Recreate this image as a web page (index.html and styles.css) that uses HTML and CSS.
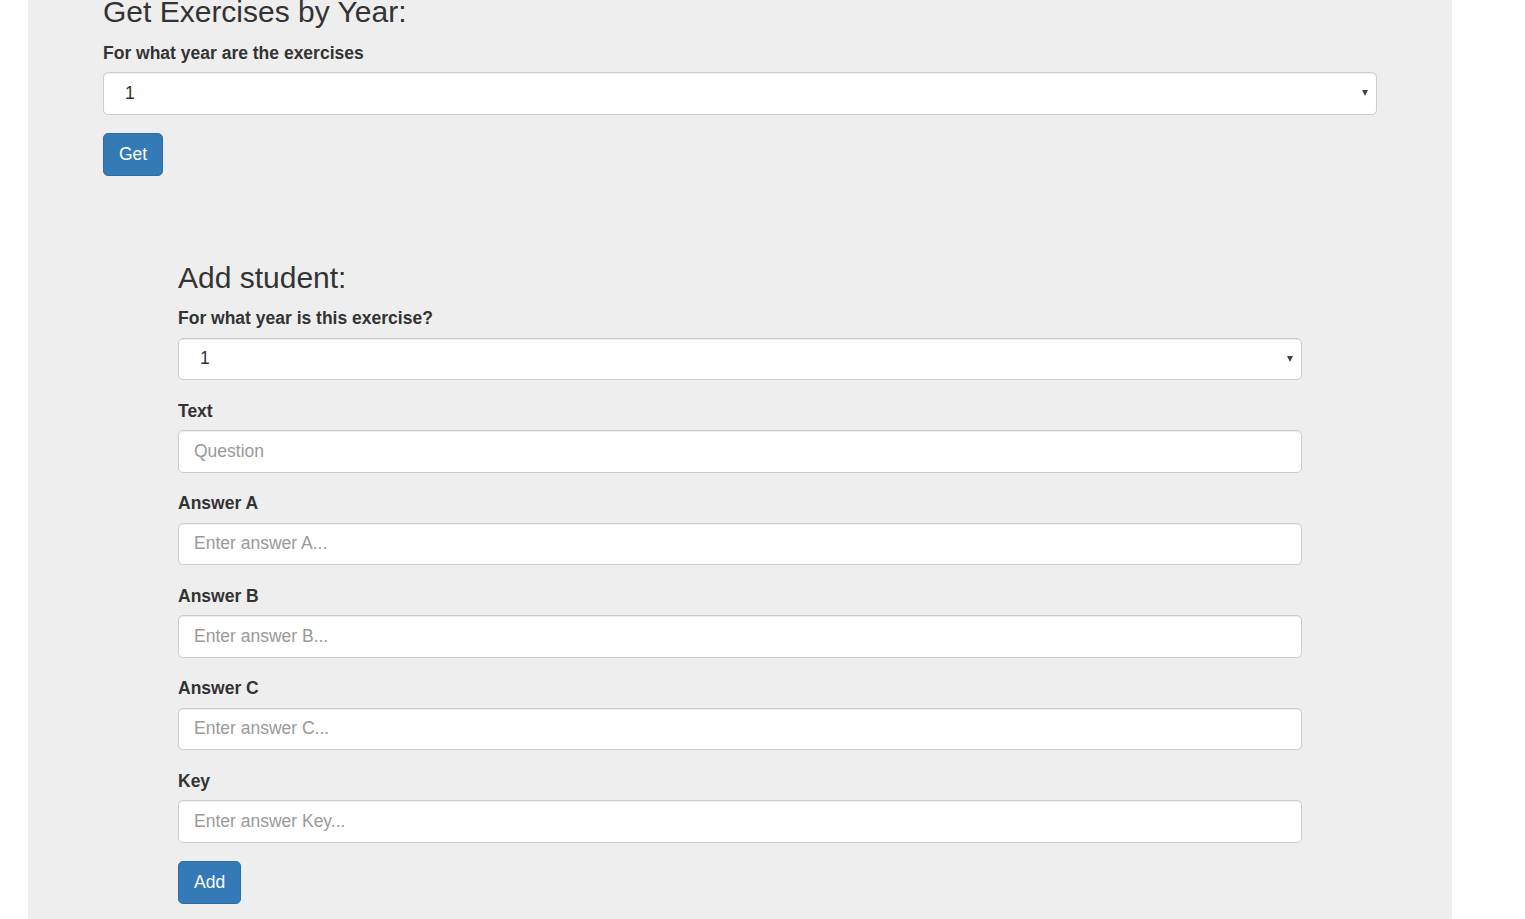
FILE: index.html
```html
<!DOCTYPE html>
<html>
<head>
<meta charset="utf-8">
<title>Exercises</title>
<link rel="stylesheet" href="styles.css">
</head>
<body>
<div class="page">
  <div class="panel">
    <h3 class="title first">Get Exercises by Year:</h3>
    <form class="form">
      <div class="group">
        <label class="label">For what year are the exercises</label>
        <div class="select-wrap">
          <select class="control select"><option>1</option><option>2</option><option>3</option></select>
        </div>
      </div>
      <button type="button" class="btn">Get</button>
    </form>

    <div class="inner">
      <h3 class="title">Add student:</h3>
      <form class="form">
        <div class="group">
          <label class="label">For what year is this exercise?</label>
          <div class="select-wrap">
            <select class="control select"><option>1</option><option>2</option><option>3</option></select>
          </div>
        </div>
        <div class="group">
          <label class="label">Text</label>
          <input class="control" type="text" placeholder="Question">
        </div>
        <div class="group">
          <label class="label">Answer A</label>
          <input class="control" type="text" placeholder="Enter answer A...">
        </div>
        <div class="group">
          <label class="label">Answer B</label>
          <input class="control" type="text" placeholder="Enter answer B...">
        </div>
        <div class="group">
          <label class="label">Answer C</label>
          <input class="control" type="text" placeholder="Enter answer C...">
        </div>
        <div class="group">
          <label class="label">Key</label>
          <input class="control" type="text" placeholder="Enter answer Key...">
        </div>
        <button type="button" class="btn">Add</button>
      </form>
    </div>
  </div>
</div>
</body>
</html>
```

FILE: styles.css
```css
html, body {
  margin: 0;
  padding: 0;
  background: #fff;
}
body {
  font-family: "Liberation Sans", Arial, Helvetica, sans-serif;
  font-size: 17.5px;
  line-height: 25px;
  color: #333;
}
.page {
  padding-left: 28px;
  width: 1424px;
  overflow: hidden;
}
.panel {
  background: #eee;
  padding: 0 75px 40px;
  border-top: 0.1px solid #eee;
  margin-top: -5.6px;
}
.title {
  font-size: 30px;
  font-weight: 500;
  line-height: 33px;
  margin: 25px 0 12.5px;
  color: #333;
}
.title.first {
  margin-top: 0;
}
.form {
  margin: 0;
}
.group {
  margin-bottom: 18.75px;
}
.label {
  display: block;
  font-weight: bold;
  font-size: 17.5px;
  line-height: 25px;
  margin-bottom: 6.25px;
}
.control {
  display: block;
  box-sizing: border-box;
  width: 100%;
  height: 42.5px;
  padding: 7.5px 15px;
  font-family: "Liberation Sans", Arial, Helvetica, sans-serif;
  font-size: 17.5px;
  line-height: 25px;
  color: #555;
  background: #fff;
  border: 1.25px solid #ccc;
  border-radius: 5px;
  box-shadow: inset 0 1px 1px rgba(0,0,0,.075);
  outline: none;
  margin: 0;
}
.control::placeholder {
  color: #999;
  opacity: 1;
}
.select-wrap {
  position: relative;
}
.select {
  -webkit-appearance: none;
  appearance: none;
  padding-left: 21px;
  color: #333;
}
.select-wrap::after {
  content: "";
  position: absolute;
  right: 9px;
  top: 18px;
  width: 0;
  height: 0;
  border-left: 3.5px solid transparent;
  border-right: 3.5px solid transparent;
  border-top: 6px solid #444;
  pointer-events: none;
}
.btn {
  display: inline-block;
  box-sizing: border-box;
  height: 42.5px;
  padding: 7.5px 15px;
  font-family: "Liberation Sans", Arial, Helvetica, sans-serif;
  font-size: 17.5px;
  line-height: 25px;
  color: #fff;
  background: #337ab7;
  border: 1.25px solid #2e6da4;
  border-radius: 5px;
  cursor: pointer;
  margin: 0;
}
.inner {
  padding: 60px 75px 0;
}
```
